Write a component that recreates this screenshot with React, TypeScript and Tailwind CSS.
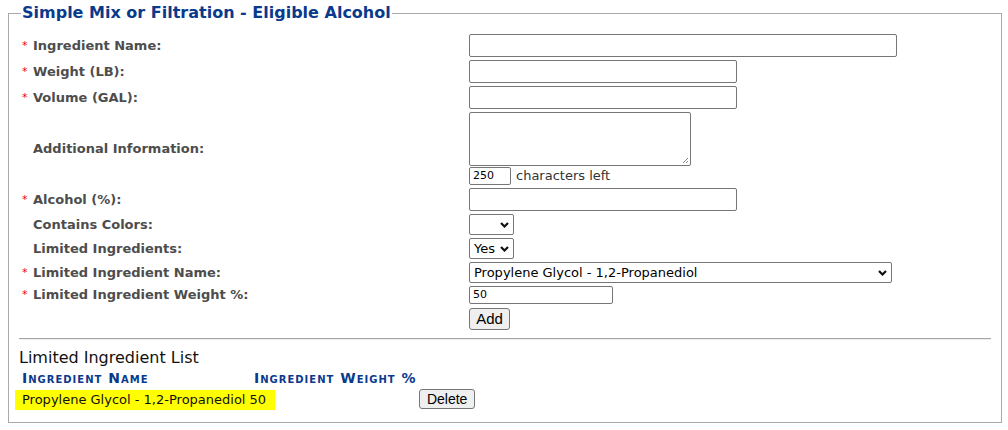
import React from 'react';

const font = { fontFamily: '"DejaVu Sans", Verdana, sans-serif' };

function Chevron() {
  return (
    <svg
      className="pointer-events-none absolute right-[5px] top-1/2 -translate-y-1/2"
      width="9"
      height="6"
      viewBox="0 0 9 6"
      aria-hidden
    >
      <path d="M1 1l3.5 3.5L8 1" fill="none" stroke="#111" strokeWidth="2.2" />
    </svg>
  );
}

function Select({ width, value }: { width: string; value: string }) {
  return (
    <div className={`relative ${width} h-[21px]`}>
      <div className="h-full w-full border border-[#767676] rounded-[2px] bg-white pl-[4px] text-[13px] leading-[19px] text-black">
        {value}
      </div>
      <Chevron />
    </div>
  );
}

function Label({ text, required }: { text: string; required?: boolean }) {
  return (
    <div className="flex items-center leading-[16px]">
      <span className="w-[11px] text-[11px] text-[#e8001c]">{required ? '*' : ''}</span>
      <span className="text-[13px] font-bold text-[#4d4d4d]">{text}</span>
    </div>
  );
}

const inputCls = 'block h-[23px] border border-[#767676] rounded-[2px] bg-white';

export default function App() {
  return (
    <div className="bg-white w-[1008px] h-[430px]" style={font}>
      <fieldset className="ml-2 w-[994px] h-[423px] border border-[#aaaaaa] px-0">
        <legend className="ml-3 px-px text-[16px] leading-[26px] font-bold text-[#0a3a8c]">
          Simple Mix or Filtration - Eligible Alcohol
        </legend>

        <div className="grid grid-cols-[447px_1fr] gap-y-[3px] pl-[13px] pt-[8px]">
          <Label text="Ingredient Name:" required />
          <input className={`${inputCls} w-[428px]`} />

          <Label text="Weight (LB):" required />
          <input className={`${inputCls} w-[268px]`} />

          <Label text="Volume (GAL):" required />
          <input className={`${inputCls} w-[268px]`} />

          <Label text="Additional Information:" />
          <div className="flex flex-col">
            <div className="relative w-[222px] h-[54px] border border-[#767676] rounded-[2px] bg-white">
              <svg className="absolute right-[1px] bottom-[1px]" width="7" height="7" viewBox="0 0 7 7" aria-hidden>
                <path d="M6 1L1 6M6 4L4 6" stroke="#888" strokeWidth="1" />
              </svg>
            </div>
            <div className="flex items-center h-[19px] pt-px">
              <div className="w-[42px] h-[18px] border border-[#767676] rounded-[2px] pl-[3px] text-[11px] leading-[16px] text-black">
                250
              </div>
              <span className="ml-[5px] text-[13px] text-[#333]">characters left</span>
            </div>
          </div>

          <Label text="Alcohol (%):" required />
          <input className={`${inputCls} w-[268px]`} />

          <Label text="Contains Colors:" />
          <Select width="w-[45px]" value="" />

          <Label text="Limited Ingredients:" />
          <Select width="w-[45px]" value="Yes" />

          <Label text="Limited Ingredient Name:" required />
          <Select width="w-[423px]" value="Propylene Glycol - 1,2-Propanediol" />

          <Label text="Limited Ingredient Weight %:" required />
          <div className="w-[144px] h-[18px] border border-[#767676] rounded-[2px] pl-[3px] text-[11px] leading-[16px] text-black">
            50
          </div>

          <div />
          <button
            className="mt-px w-[41px] h-[22px] border border-[#767676] rounded-[3px] bg-[#efefef] text-[15px] leading-[20px] text-black"
            style={{ fontFamily: '"Liberation Sans", Arial, sans-serif' }}
          >
            Add
          </button>
        </div>

        <div className="mx-[10px] mt-[8px] border-t border-b border-t-[#a6a6a6] border-b-[#eeeeee]" />

        <div className="pl-[10px]">
          <div className="mt-[8px] text-[16px] leading-[20px] text-[#111]">Limited Ingredient List</div>

          <div className="mt-[2px] grid grid-cols-[232px_165px_auto] pl-[3px] text-[14px] leading-[16px] tracking-[1px] font-bold text-[#0a3a8c] [font-variant:small-caps]">
            <span>Ingredient Name</span>
            <span>Ingredient Weight %</span>
            <span />
          </div>

          <div className="mt-[4px] flex items-center">
            <span className="bg-[#ffff00] pl-[7px] pr-[9px] -ml-[4px] text-[13px] leading-[20px] text-[#111]">
              Propylene Glycol - 1,2-Propanediol 50
            </span>
            <button
              className="ml-[144px] -mt-[2px] w-[56px] h-[20px] border border-[#767676] rounded-[3px] bg-[#efefef] text-[14px] leading-[18px] text-black"
              style={{ fontFamily: '"Liberation Sans", Arial, sans-serif' }}
            >
              Delete
            </button>
          </div>
        </div>
      </fieldset>
    </div>
  );
}
